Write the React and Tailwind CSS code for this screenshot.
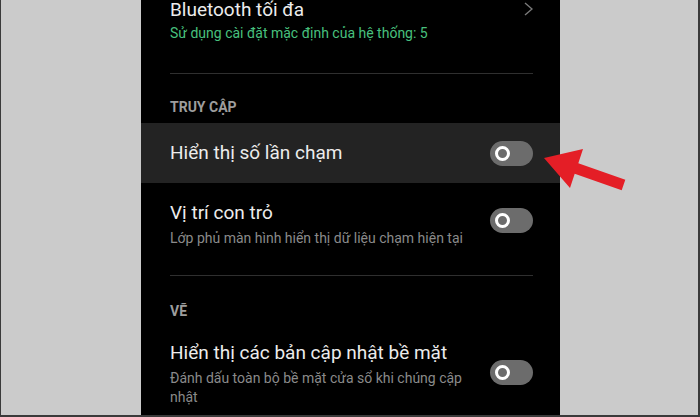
import React from "react";

const Toggle = ({ className = "" }) => (
  <div
    className={`relative w-[43px] h-[25px] shrink-0 rounded-full bg-[#6c6c6c] ${className}`}
  >
    <div className="absolute left-[5px] top-[5px] w-[15px] h-[15px] rounded-full border-[3.5px] border-white bg-[#6c6c6c]" />
  </div>
);

const SectionTitle = ({ children, className = "" }) => (
  <div
    className={`text-[14px] leading-[20px] font-bold text-[#9d9d9d] ${className}`}
  >
    {children}
  </div>
);

export default function App() {
  return (
    <div className="relative flex w-[700px] h-[417px] overflow-hidden bg-[#cbcbcb] border-l border-r-2 border-b-2 border-[#3a3a3a] font-[Roboto,'Noto_Sans',sans-serif]">
      <div className="w-[140px] shrink-0" />

      {/* phone screen */}
      <div className="w-[419px] shrink-0 bg-black">
        <div className="pl-[29px] pr-[27px]">
          <div className="flex justify-between mt-[-2px]">
            <div>
              <div className="text-[19px] leading-[23px] text-[#ececec]">
                Bluetooth tối đa
              </div>
              <div className="mt-[2px] text-[14px] leading-[20px] text-[#48c07e]">
                Sử dụng cài đặt mặc định của hệ thống: 5
              </div>
            </div>
            <svg
              width="9"
              height="14"
              viewBox="0 0 9 14"
              className="mt-[4px]"
              fill="none"
            >
              <polyline
                points="1,1 8,7 1,13"
                stroke="#7a7a7a"
                strokeWidth="1.4"
              />
            </svg>
          </div>
          <div className="mt-[30px] h-px bg-[#2f2f2f]" />
          <SectionTitle className="mt-[23px]">TRUY CẬP</SectionTitle>
        </div>

        <div className="mt-[6px] h-[60px] flex items-center justify-between bg-[#232323] pl-[29px] pr-[27px]">
          <div className="text-[19px] leading-[24px] text-[#ececec]">
            Hiển thị số lần chạm
          </div>
          <Toggle />
        </div>

        <div className="pl-[29px] pr-[27px]">
          <div className="mt-[18px] flex items-start justify-between gap-[10px]">
            <div>
              <div className="text-[19px] leading-[24px] text-[#ececec]">
                Vị trí con trỏ
              </div>
              <div className="mt-[3px] text-[14px] leading-[20px] text-[#8a8a8a]">
                Lớp phủ màn hình hiển thị dữ liệu chạm hiện tại
              </div>
            </div>
            <Toggle className="mt-[7px]" />
          </div>

          <div className="mt-[27px] h-px bg-[#2f2f2f]" />
          <SectionTitle className="mt-[25px]">VẼ</SectionTitle>

          <div className="mt-[20px] flex items-start justify-between gap-[10px]">
            <div className="flex-1">
              <div className="text-[19px] leading-[24px] text-[#ececec]">
                Hiển thị các bản cập nhật bề mặt
              </div>
              <div className="mt-[4px] text-[14px] leading-[19px] text-[#8a8a8a]">
                Đánh dấu toàn bộ bề mặt cửa sổ khi chúng cập nhật
              </div>
            </div>
            <Toggle className="mt-[19px]" />
          </div>
        </div>
      </div>

      <div className="flex-1" />

      {/* red arrow pointing at the toggle */}
      <svg
        className="absolute left-0 top-0 pointer-events-none"
        width="700"
        height="417"
        viewBox="0 0 700 417"
      >
        <polygon
          points="543,158 582,149 577.3,163.3 624.3,179.8 620.7,190.2 573.7,173.7 569,188"
          fill="#e41e26"
        />
      </svg>
    </div>
  );
}
